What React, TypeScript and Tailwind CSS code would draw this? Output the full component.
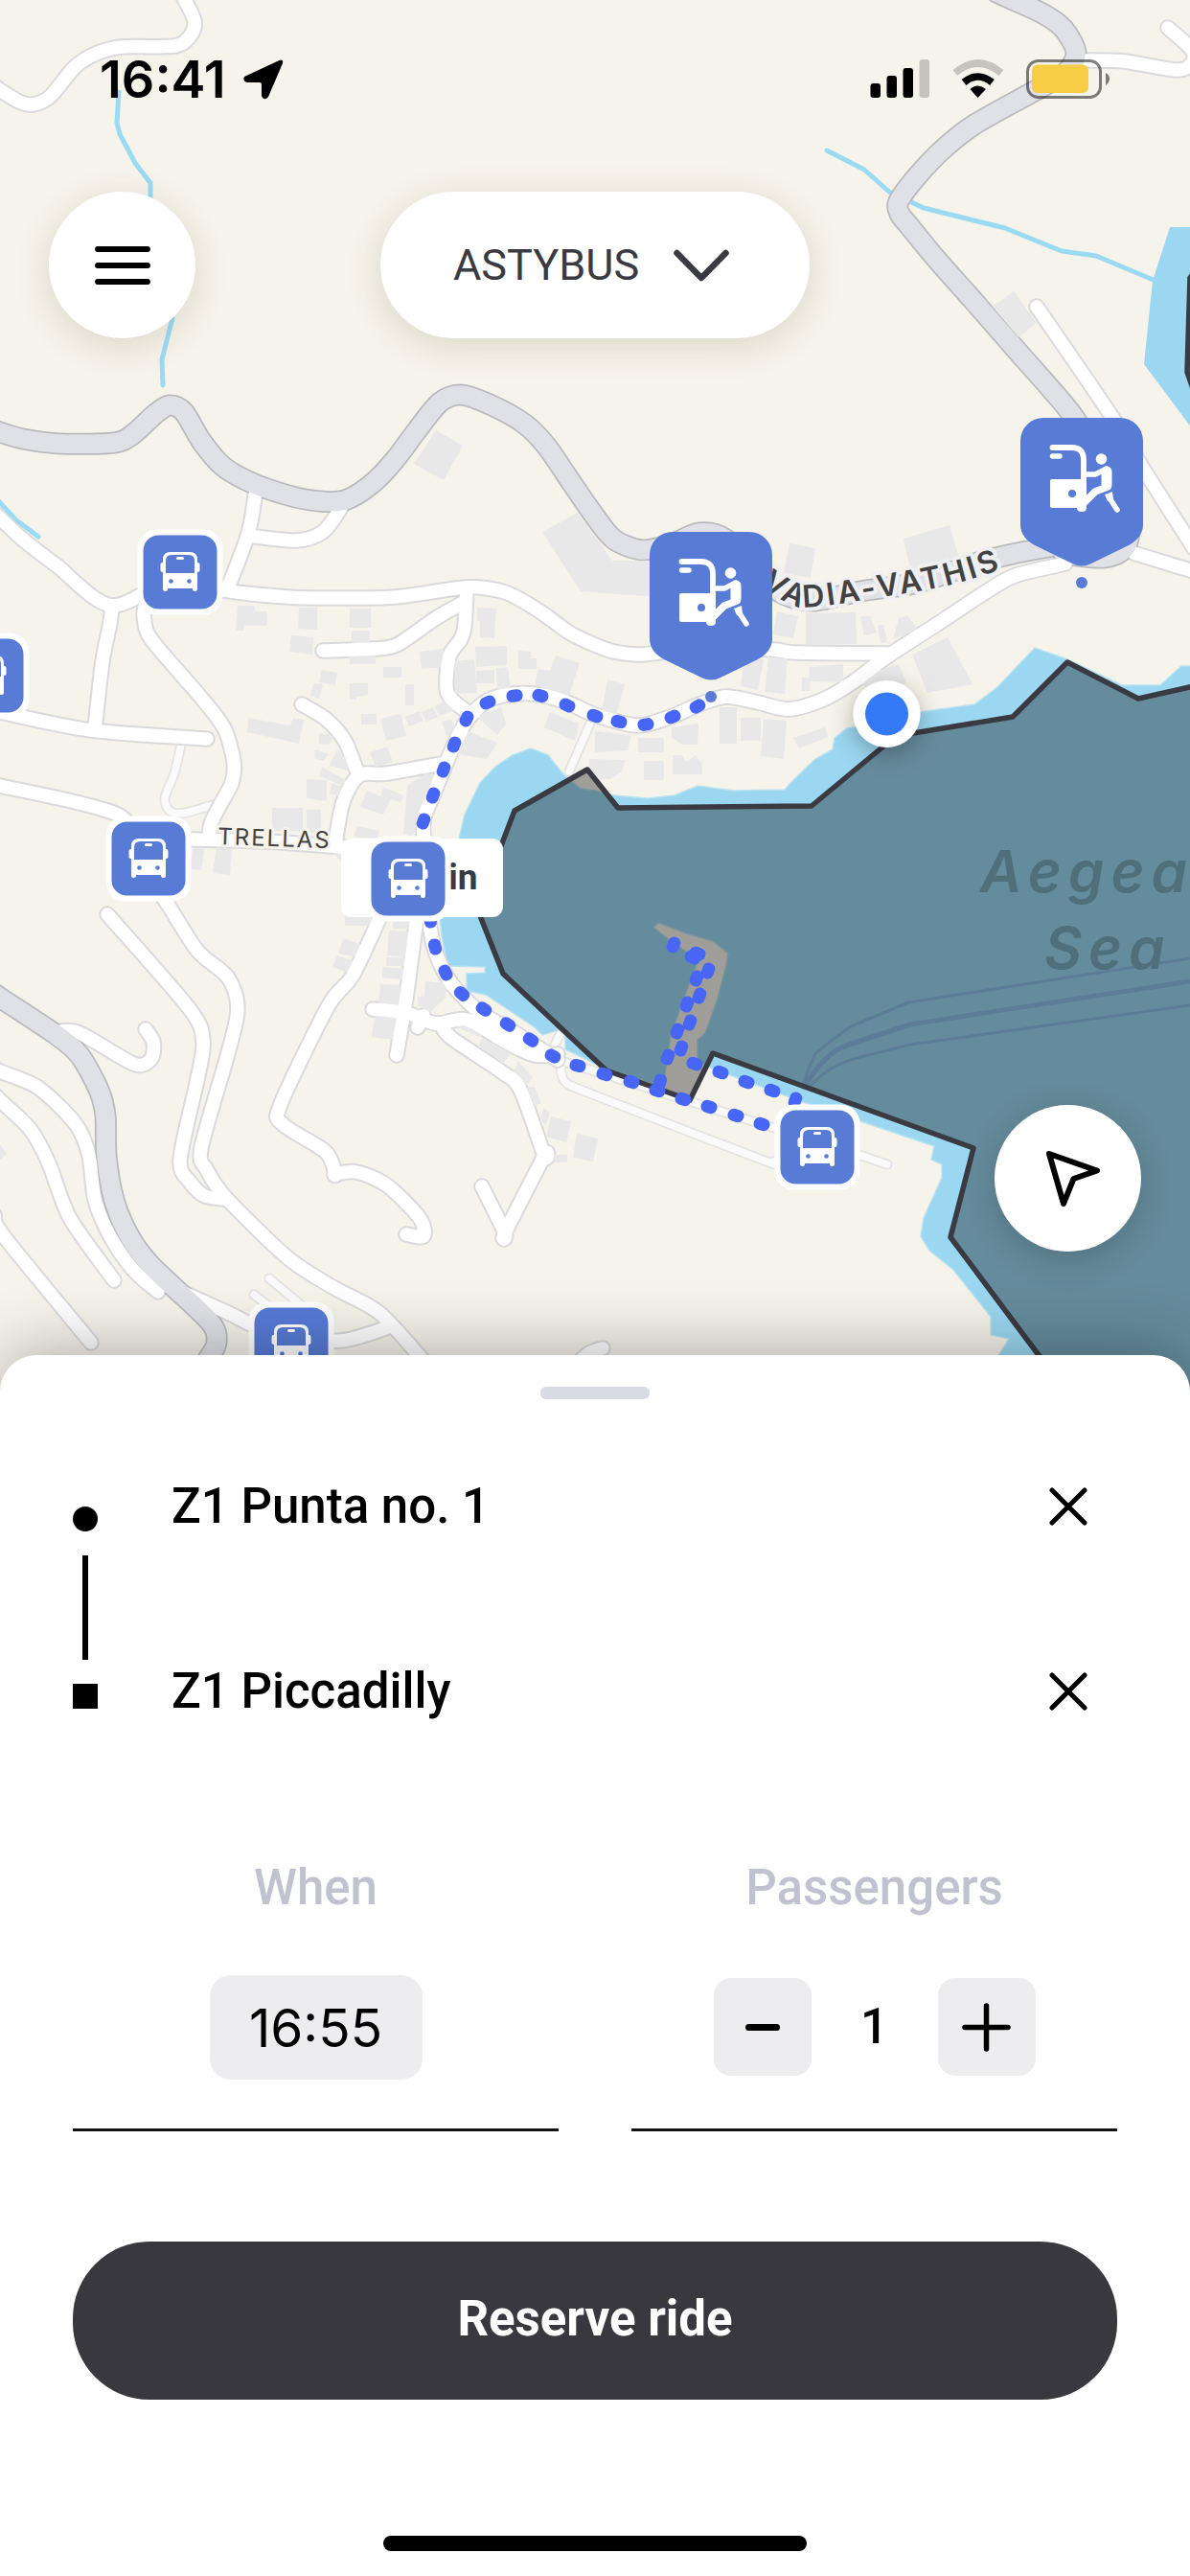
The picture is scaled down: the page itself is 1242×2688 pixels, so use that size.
import { useState } from "react";

type Point = [number, number];

const parse = (s: string): Point[] =>
  s.split(" ").map((p) => p.split(",").map(Number) as Point);

// smooth curve through every point (Catmull-Rom), a doubled point gives a sharp corner
const curve = (s: string) => {
  const p = parse(s);
  let d = `M${p[0][0]} ${p[0][1]}`;
  for (let i = 0; i < p.length - 1; i++) {
    const a = p[i - 1] ?? p[i];
    const b = p[i];
    const c = p[i + 1];
    const e = p[i + 2] ?? c;
    d += `C${b[0] + (c[0] - a[0]) / 7} ${b[1] + (c[1] - a[1]) / 7} ${c[0] - (e[0] - b[0]) / 7} ${c[1] - (e[1] - b[1]) / 7} ${c[0]} ${c[1]}`;
  }
  return d;
};

const majorRoads = [
  "-10,447 0,451 24,458 63,463 119,462 139,453 162,432 177,423 192,430 210,460 232,486 261,503 301,517 333,523 360,522 388,505 412,480 436,448 459,420 481,412 511,422 547,442 570,465 594,500 621,539 641,563 670,574 700,568 730,556 758,563 790,600 820,621 851,627 898,617 958,608 1017,588 1057,578 1110,568",
  "1040,-8 1053,-2 1088,14 1110,30 1123,55 1112,76 1076,97 1017,130 985,155 958,183 938,210 939,223 950,237 977,270 1017,315 1065,370 1096,405 1122,437 1160,500 1178,545 1174,572 1152,582 1110,578",
  "-10,1034 0,1041 59,1080 83,1101 103,1137 110,1164 111,1206 119,1252 135,1290 158,1321 218,1378 226,1401 216,1420",
].map(curve);

const minorRoads = [
  "-6,89 0,94 20,106 34,109 52,101 78,70 100,56 127,49 182,48 198,38 203,22 191,-4",
  "1133,63 1173,64 1228,73 1244,66 1244,52 1219,29",
  "1082,320 1162,437 1195,492 1246,572",
  "1183,577 1242,595 1250,597",
  "1112,588 1061,600 1033,615 977,652 926,685 890,712 859,730 823,740 791,733 758,727 730,735 700,748 665,757 621,746 592,733 564,725 537,724 509,731 488,751 474,777 463,803 452,830 442,857 444,900 448,961 455,995 471,1026 499,1055 531,1074 582,1106",
  "926,682 831,681 807,678 740,676 680,682 665,683 641,680 621,673 594,660 562,637 527,618 487,613 412,623 341,624 301,623 234,616 188,600 117,632 59,590 24,563 -6,535",
  "117,632 115,650 107,690 99,760",
  "-6,742 0,743 95,762 216,771",
  "165,610 152,630 151,650 160,670 210,728 234,760 244,795 242,817 228,843 220,860 218,875",
  "-6,819 0,820 79,837 123,850 140,866",
  "160,875 277,878 370,885",
  "267,512 259,557 238,613",
  "259,559 309,564 337,555 356,530",
  "487,613 485,653 481,667 469,685 467,723 489,744",
  "485,628 455,645 414,673 388,677 337,679",
  "315,735 341,751 360,773 372,803 375,809",
  "466,796 404,807 375,809 358,837 350,880",
  "155,915 174,942 206,992 238,1020 248,1053 238,1099 210,1198 216,1221 236,1250 301,1313 349,1344 396,1370 444,1422",
  "112,954 198,1053 212,1087 206,1126 188,1210 198,1233 214,1248 236,1251",
  "400,950 368,1018 343,1049 293,1152 295,1173 340,1202 350,1225 350,1225 372,1223 404,1237 438,1271 442,1290 424,1288",
  "436,950 424,1041 414,1101",
  "389,1053 424,1057 455,1068 487,1064 527,1087 558,1101 582,1100",
  "442,1060 436,1072",
  "461,1070 471,1083 523,1118 543,1137 568,1206 568,1206 527,1286 527,1286 503,1238",
  "63,1076 83,1078 135,1108 149,1111 159,1103 160,1087 152,1074",
  "-6,1114 0,1118 40,1135 79,1173 93,1206 99,1252 115,1290 139,1325 165,1348",
  "-6,1142 0,1148 32,1179 51,1214 73,1271 119,1336",
  "-6,1268 4,1290 95,1401",
  "185,1346 238,1370 290,1394 356,1399 408,1384",
  "600,1425 615,1412 629,1407",
].map(curve);

const alleys = [
  "189,777 182,807 172,833 178,847 194,848 222,840",
  "616,755 594,805",
  "582,1106 631,1121 713,1147 795,1173 852,1190 926,1215",
  "585,1112 590,1129 621,1143 795,1210 807,1212 830,1200",
  "584,1080 574,1102",
  "281,1334 330,1375",
  "265,1351 290,1370",
].map(curve);

const streams = [
  "124,96 122,128 125,140 141,170 157,191 157,240 180,332 169,375 170,402",
  "863,157 902,177 928,200 964,217 1049,238 1108,262 1144,267 1206,293",
  "-4,520 16,542 40,560",
];

const buildings = [
  "455,449 483,465 463,501 432,484",
  "566,555 603,535 639,585 700,585 700,624 606,617",
  "248,632 265,632 266,638 279,638 278,653 255,653 255,658 246,658",
  "312,634 331,634 331,657 311,656",
  "365,635 387,635 387,655 365,655",
  "304,663 327,665 326,683 302,680",
  "367,658 386,658 386,671 367,671",
  "365,682 392,682 392,693 365,693",
  "335,699 352,702 350,715 333,712",
  "327,713 337,714 333,729 324,726",
  "365,713 384,713 384,725 372,727 372,730 365,730",
  "400,696 419,696 419,707 400,707",
  "423,714 432,714 432,736 423,736",
  "438,680 463,677 465,696 440,698",
  "474,690 495,688 498,723 475,724",
  "496,675 529,674 529,694 497,696",
  "498,634 518,635 516,666 501,665 501,648 498,648",
  "541,679 554,680 554,687 560,687 560,698 541,698",
  "497,700 516,699 516,713 497,713",
  "518,697 530,696 533,720 519,722",
  "562,698 574,700 580,684 605,692 593,728 558,715",
  "259,749 303,757 306,749 317,751 312,776 258,764",
  "377,745 393,745 393,756 377,756",
  "397,750 418,745 424,768 403,773",
  "423,748 438,742 442,752 427,758",
  "440,743 452,738 457,748 445,753",
  "453,737 467,731 474,741 459,747",
  "461,753 471,751 481,767 467,770",
  "497,747 523,738 528,755 519,767",
  "485,762 519,775 508,792 477,787",
  "574,743 604,755 600,773 568,759",
  "333,765 349,768 343,777 333,776",
  "329,782 343,787 337,794 328,791",
  "352,782 368,797 366,805 344,799",
  "336,800 362,815 358,820 333,810",
  "386,785 404,779 410,795 392,800",
  "320,813 341,814 341,836 320,833",
  "347,817 360,823 354,831 344,828",
  "383,825 407,835 400,850 376,842",
  "400,821 421,830 418,837 397,832",
  "444,807 459,809 430,873 421,870 425,820",
  "284,843 316,843 316,867 284,867",
  "320,845 335,845 335,869 320,869",
  "373,862 396,867 394,875 369,873",
  "201,884 213,886 210,908 199,907",
  "226,884 242,886 240,913 222,911",
  "347,890 358,882 358,900",
  "358,979 378,986 374,999 353,995",
  "352,997 371,1004 366,1016 347,1009",
  "406,971 428,972 425,999 404,997",
  "360,955 392,955 392,966 360,966",
  "410,961 430,961 430,969 410,969",
  "403,999 423,999 423,1008 403,1008",
  "399,1009 421,1011 421,1022 399,1020",
  "397,1027 420,1028 417,1052 395,1050",
  "391,1060 414,1062 411,1085 388,1082",
  "444,1024 467,1026 465,1041 448,1057 436,1049 436,1041 443,1039",
  "469,1068 485,1069 504,1080 499,1082",
  "503,1083 533,1099 525,1110 500,1091",
  "541,1108 556,1124 549,1133 535,1118",
  "550,1135 558,1134 565,1151 558,1154",
  "567,1156 574,1161 570,1173 564,1171",
  "575,1165 596,1170 591,1192 570,1186",
  "602,1183 624,1188 619,1212 598,1208",
  "578,1205 592,1205 592,1213 578,1213",
  "0,1194 7,1204 0,1210",
  "824,567 851,572 846,603 818,598",
  "943,562 991,548 1001,583 950,595",
  "811,638 833,643 828,666 807,662",
  "841,640 893,639 894,672 841,673",
  "898,643 908,643 915,660 902,663",
  "916,653 922,652 926,670 919,671",
  "938,645 947,642 958,657 932,667",
  "952,683 989,665 1015,714 968,723",
  "894,707 938,693 946,713 906,720",
  "777,687 797,688 791,720 773,716",
  "802,686 822,687 819,724 798,722",
  "845,696 880,693 880,712 846,711 845,721 837,721 837,707 844,707",
  "634,709 652,714 643,747 628,743",
  "751,738 769,738 769,776 751,776",
  "773,749 794,749 794,773 773,773",
  "797,750 821,752 818,792 794,789",
  "828,770 861,759 864,769 834,781",
  "701,759 729,755 728,777 712,777 701,770",
  "666,770 693,770 693,785 666,785",
  "621,763 659,767 655,783 621,785",
  "672,794 693,794 693,814 672,814",
  "702,788 712,788 716,795 726,788 733,797 733,808 702,808",
  "615,792 652,793 649,805 637,813 615,813",
  "1036,320 1058,304 1082,337 1063,352",
];

const SEA =
  "479,875 485,850 501,817 517,800 535,788 554,781 572,788 588,808 606,823 621,825 641,830 676,833 704,830 728,820 766,825 819,824 829,813 851,792 869,782 871,770 884,760 960,743 1017,735 1041,717 1080,676 1114,688 1171,715 1211,715 1233,695 1250,695 1250,1500 1041,1500 1041,1416 1053,1397 1034,1393 1034,1374 995,1325 970,1305 961,1290 964,1271 983,1229 983,1215 972,1210 975,1196 898,1170 835,1149 738,1113 728,1105 728,1085 736,1078 748,1045 758,1007 760,995 744,982 716,974 688,963 682,967 692,976 716,993 728,1003 700,1080 692,1135 621,1110 590,1095 590,1083 586,1074 566,1080 558,1072 507,1038 487,1034 487,1016 506,1015 506,1009 467,1008 461,976 459,957";

const ZONE =
  "1250,715 1188,729 1114,691 1057,748 935,768 847,841 645,843 613,803 537,846 498,948 525,1016 621,1106 633,1117 720,1148 744,1099 1016,1198 992,1291 1084,1414 1150,1500 1250,1500";

// x, y, heading
const routeDots = [
  [728, 737, -32], [702, 748, -22], [674, 756, -10], [646, 753, 14], [621, 747, 20],
  [592, 736, 25], [564, 726, 15], [537, 726, -8], [509, 733, -22], [487, 750, -65],
  [474, 777, -68], [463, 803, -70], [452, 830, -70], [442, 857, -70], [449, 960, 80],
  [454, 988, 76], [465, 1015, 64], [482, 1037, 42], [505, 1053, 34], [530, 1069, 34],
  [554, 1085, 34], [577, 1102, 28], [603, 1112, 14], [631, 1121, 16], [659, 1129, 18],
  [686, 1138, 18], [713, 1147, 18], [740, 1155, 18], [768, 1164, 18], [795, 1173, 18],
  [703, 986, -68], [723, 999, 25], [728, 995, 20], [727, 1021, -70], [739, 1013, -70],
  [717, 1048, -70], [730, 1039, -70], [707, 1076, -70], [720, 1067, -70], [697, 1103, -70],
  [711, 1094, -70], [689, 1129, -75], [725, 1110, 20], [752, 1119, 20], [779, 1129, 20],
  [806, 1138, 20], [830, 1148, -70],
];

const busStops: Point[] = [
  [188, 597],
  [-14, 705],
  [155, 896],
  [426, 917],
  [853, 1197],
  [304, 1403],
];

const BusStop = ({ x, y }: { x: number; y: number }) => (
  <g transform={`translate(${x} ${y})`}>
    <rect x="-44.5" y="-44.5" width="89" height="89" rx="20" fill="#fff" />
    <rect x="-38.5" y="-38.5" width="77" height="77" rx="16" fill="#587bd6" />
    <path
      d="M-10-21H10Q18-21 18-13V16V18Q18 20 15.500 20T13 18V17H-13V18Q-13 20-15.500 20T-18 18V-13Q-18-21-10-21Z"
      fill="#fff"
    />
    <path d="M-9-18H9Q15-18 15-12V1H-15V-12Q-15-18-9-18Z" fill="#587bd6" />
    <rect x="-20.500" y="-10" width="4" height="10" rx="2" fill="#fff" />
    <rect x="16.500" y="-10" width="4" height="10" rx="2" fill="#fff" />
    <rect x="-4" y="-16" width="8" height="3" rx="1.500" fill="#fff" />
    <circle cx="-9.500" cy="9.500" r="2.300" fill="#587bd6" />
    <circle cx="9.500" cy="9.500" r="2.300" fill="#587bd6" />
  </g>
);

const BoardingPin = ({ x, y }: { x: number; y: number }) => (
  <g transform={`translate(${x} ${y})`}>
    <path
      d="M-40 0H40A24 24 0 0 1 64 24V112C64 121 57 129 49 133L10 152Q0 157-10 152L-49 133C-57 129-64 121-64 112V24A24 24 0 0 1-40 0Z"
      fill="#587bd6"
    />
    <g fill="none" stroke="#fff" strokeLinecap="round" strokeLinejoin="round">
      <path d="M-30.500 31H-11Q2 31 2 44V68" strokeWidth="5.800" />
      <path d="M-30.500 40H-23" strokeWidth="5.500" />
      <path d="M3 59H14L26 53" strokeWidth="5.500" />
      <path d="M26 56V70" strokeWidth="11" />
      <path d="M27 72L14 77L3 88" strokeWidth="7.500" />
      <path d="M37 96L28.500 83" strokeWidth="5.500" />
    </g>
    <path d="M24 80L32 77L33 85L27 87Z" fill="#fff" />
    <path
      d="M-31 64H5V94Q5 98 0 98T-5 94H-31Q-33 94-33 92V66Q-33 64-31 64Z"
      fill="#fff"
    />
    <circle cx="20.500" cy="43" r="5.800" fill="#fff" />
    <circle cx="-10" cy="79" r="4" fill="#587bd6" />
    <circle cx="0" cy="172" r="6" fill="#587bd6" />
  </g>
);

const CityMap = () => (
  <svg
    className="absolute inset-x-0 top-0 h-[1500px] w-full bg-[#f6f3ea]"
    viewBox="0 0 1242 1500"
    preserveAspectRatio="xMidYMin slice"
    role="img"
    aria-label="Map of Livadia"
  >
    <defs>
      <path id="vathis" d="M730 560C765 575 780 605 808 621S835 634 852 633S900 626 932 621S996 612 1047 593" />
      <filter id="dotShadow" x="-50%" y="-50%" width="200%" height="200%">
        <feDropShadow dx="0" dy="6" stdDeviation="12" floodOpacity="0.3" />
      </filter>
    </defs>

    <polygon points={SEA} fill="#9bd7f0" stroke="#b9e2f1" strokeWidth="1.500" />
    <polygon points="1221,237 1250,237 1250,455 1194,380 1203,293" fill="#9bd7f0" />
    <g fill="none" stroke="#9bdaf3" strokeWidth="5" strokeLinecap="round" strokeLinejoin="round">
      {streams.map((s) => (
        <polyline key={s} points={s} />
      ))}
    </g>

    <g fill="none" strokeLinecap="round" strokeLinejoin="round">
      <g stroke="#e3e3e2" strokeWidth="11">
        {alleys.map((d) => <path key={d} d={d} />)}
      </g>
      <g stroke="#fafafa" strokeWidth="7.500">
        {alleys.map((d) => <path key={d} d={d} />)}
      </g>
      <g stroke="#dadadc" strokeWidth="17.500">
        {minorRoads.map((d) => <path key={d} d={d} />)}
      </g>
      <g stroke="#b9babd" strokeWidth="23">
        {majorRoads.map((d) => <path key={d} d={d} />)}
      </g>
    </g>
    <g fill="#e8e8e8">
      {buildings.map((b) => (
        <polygon key={b} points={b} />
      ))}
    </g>
    <g fill="none" strokeLinecap="round" strokeLinejoin="round">
      <g stroke="#ffffff" strokeWidth="13.500">
        {minorRoads.map((d) => <path key={d} d={d} />)}
      </g>
      <g stroke="#e0e1e6" strokeWidth="19.500">
        {majorRoads.map((d) => <path key={d} d={d} />)}
      </g>
      <path d={minorRoads[4]} stroke="#fff" strokeWidth="13.500" />
    </g>

    <g fill="none" stroke="#8fbfe9" strokeLinejoin="round">
      <path d="M837 1133L851 1099L886 1072L948 1046L1242 1000" strokeWidth="3" />
      <path d="M838 1137Q860 1098 886 1090L950 1069L1242 1024" strokeWidth="5" />
      <path d="M843 1137Q862 1112 898 1103L950 1090L1242 1049" strokeWidth="3" />
    </g>

    <g className="font-[Inter,sans-serif] font-semibold italic" fontSize="60" fill="#7aabbc" letterSpacing="7">
      <text x="1023" y="931">Aegea</text>
      <text x="1090" y="1011">Sea</text>
    </g>

    <polygon points={ZONE} fill="#000" fillOpacity="0.350" stroke="#3a3a42" strokeWidth="5.500" strokeLinejoin="round" />
    <polygon points="1250,280 1242,290 1239,388 1250,420" fill="#000" fillOpacity="0.350" stroke="#3a3a42" strokeWidth="5.500" />

    <g className="font-[Inter,sans-serif]" fill="#424242" stroke="#f6f3ea" strokeLinejoin="round" paintOrder="stroke">
      <text fontSize="32" fontWeight="600" letterSpacing="3" textAnchor="end" strokeWidth="8" stroke="#f0f0f2">
        <textPath href="#vathis" startOffset="100%">LIVADIA-VATHIS</textPath>
      </text>
      <text x="227" y="881" fontSize="24" letterSpacing="2" strokeWidth="6" transform="rotate(2 227 881)">
        TRELLAS
      </text>
    </g>

    <g fill="#4766f5">
      {routeDots.map(([x, y, a]) => (
        <rect key={`${x}-${y}`} x="-8.500" y="-6.500" width="17" height="13" rx="6" transform={`translate(${x} ${y}) rotate(${a})`} />
      ))}
    </g>

    <rect x="356" y="875" width="169" height="82" rx="11" fill="#fff" />
    <text x="468" y="928" className="font-[Roboto,sans-serif] font-bold" fontSize="37" fill="#3a3a42">
      in
    </text>
    {busStops.map(([x, y]) => (
      <BusStop key={`${x}-${y}`} x={x} y={y} />
    ))}
    <BoardingPin x={742} y={555} />
    <BoardingPin x={1129} y={436} />

    <circle cx="925.500" cy="745" r="35" fill="#fff" filter="url(#dotShadow)" />
    <circle cx="925.500" cy="745" r="22.500" fill="#347af6" />
  </svg>
);

const StatusBar = () => (
  <div className="flex h-[200px] items-start justify-between pt-[51px] pr-[84px] pl-[104px]">
    <div className="flex items-center gap-[18px]">
      <span className="font-[Inter,sans-serif] text-[54px] leading-[64px] font-semibold">16:41</span>
      <svg className="h-[42px] w-[42px]" viewBox="0 0 42 42" aria-hidden="true">
        <path
          d="M37.500 1Q42-1 41 4L26 39Q23 43 20 40L19 38V26Q19 24 17 24H4Q-1 23 1 18Z"
          fill="#000"
        />
      </svg>
    </div>
    <svg className="mt-[11px] h-[42px] w-[250px]" viewBox="908 62 250 42" aria-hidden="true">
      <rect x="908.500" y="87" width="10.500" height="15" rx="3" />
      <rect x="925.500" y="79" width="10.500" height="23" rx="3" />
      <rect x="942.500" y="71" width="10.500" height="31" rx="3" />
      <rect x="959.500" y="62" width="10.500" height="40" rx="3" fill="#c6c3bc" />
      <g fill="none" strokeWidth="7.500">
        <path d="M997 76Q1020.500 56 1045 76" stroke="#c6c3bc" />
        <path d="M1006 86Q1020.500 74 1035.500 86" stroke="#000" />
      </g>
      <path d="M1012.500 93Q1020.500 86 1029 93L1020.500 102Z" />
      <rect x="1072.500" y="63.500" width="76" height="38" rx="11" fill="none" stroke="#000" strokeOpacity="0.500" strokeWidth="3" />
      <rect x="1077" y="67.500" width="59" height="29.500" rx="6" fill="#f6cd45" />
      <path d="M1154 76Q1158 78 1158 82T1154 89Z" fillOpacity="0.500" />
    </svg>
  </div>
);

const RemoveButton = ({ label, onClick }: { label: string; onClick?: () => void }) => (
  <button type="button" aria-label={label} onClick={onClick} className="mr-[31px] shrink-0">
    <svg className="size-10" viewBox="0 0 40 40" fill="none" stroke="#000" strokeWidth="5" strokeLinecap="round">
      <path d="M3 3L37 37M37 3L3 37" />
    </svg>
  </button>
);

const RideSheet = () => {
  const [time, setTime] = useState("16:55");
  const [passengers, setPassengers] = useState(1);

  return (
    <section className="relative flex flex-col rounded-t-[38px] bg-white px-[76px] pt-[33px] pb-[26px] shadow-[0_-4px_70px_rgba(0,0,0,0.3)]">
      <div className="h-[13px] w-[114px] self-center rounded-md bg-[#d8dbe3]" />

      <div className="mt-20 flex gap-[77px]">
        <div className="flex w-[26px] flex-col items-center gap-[25px] pt-8" aria-hidden="true">
          <span className="size-[26px] rounded-full bg-black" />
          <span className="h-[109px] w-[6px] bg-black" />
          <span className="size-[26px] bg-black" />
        </div>
        <ul className="flex flex-1 flex-col gap-[129px]">
          {["Z1 Punta no. 1", "Z1 Piccadilly"].map((stop) => (
            <li key={stop} className="flex h-16 items-center justify-between">
              <span className="text-[51px] leading-[64px] font-medium">{stop}</span>
              <RemoveButton label={`Remove ${stop}`} />
            </li>
          ))}
        </ul>
      </div>

      <div className="mt-[141px] grid grid-cols-2 gap-[76px]">
        <div className="flex flex-col items-center border-b-[3px] border-[#111111]">
          <label htmlFor="when" className="text-[51px] leading-[64px] font-medium text-[#c0c3cf]">
            When
          </label>
          <input
            id="when"
            type="text"
            inputMode="numeric"
            value={time}
            onChange={(e) => setTime(e.target.value)}
            className="mt-[59px] mb-[51px] h-[109px] w-[222px] rounded-[22px] bg-[#ededef] text-center font-[Inter,sans-serif] text-[55px]"
          />
        </div>
        <div className="flex flex-col items-center border-b-[3px] border-[#111111]">
          <span id="passengers" className="text-[51px] leading-[64px] font-medium text-[#c0c3cf]">
            Passengers
          </span>
          <div role="group" aria-labelledby="passengers" className="mt-[62px] flex items-center">
            <button
              type="button"
              aria-label="Fewer passengers"
              onClick={() => setPassengers(Math.max(1, passengers - 1))}
              className="flex size-[102px] items-center justify-center rounded-[18px] bg-[#ededef]"
            >
              <span className="h-[7px] w-9 rounded-full bg-black" />
            </button>
            <output className="w-[132px] text-center text-[51px] leading-[64px] font-medium">{passengers}</output>
            <button
              type="button"
              aria-label="More passengers"
              onClick={() => setPassengers(passengers + 1)}
              className="flex size-[102px] items-center justify-center rounded-[18px] bg-[#ededef]"
            >
              <svg className="size-[51px]" viewBox="0 0 51 51" stroke="#000" strokeWidth="5.500" strokeLinecap="round">
                <path d="M25.500 3V48M3 25.500H48" />
              </svg>
            </button>
          </div>
        </div>
      </div>

      <button
        type="button"
        className="mt-[115px] h-[165px] rounded-[80px] bg-[#3a383f] pb-1 text-[51px] leading-[64px] font-bold text-white"
      >
        Reserve ride
      </button>

      <div className="mt-[142px] h-4 w-[442px] self-center rounded-full bg-black" />
    </section>
  );
};

export default function App() {
  return (
    <main className="relative flex min-h-screen flex-col overflow-hidden bg-[#f6f3ea] font-[Roboto,sans-serif] text-black">
      <CityMap />

      <div className="relative flex flex-1 flex-col">
        <StatusBar />

        <div className="grid grid-cols-[1fr_auto_1fr] items-center px-[51px]">
          <button
            type="button"
            aria-label="Menu"
            className="flex size-[153px] items-center justify-center rounded-full bg-white shadow-[0_8px_36px_rgba(90,70,30,0.16)]"
          >
            <svg className="h-[42px] w-[58px]" viewBox="0 0 58 42" stroke="#000" strokeWidth="5.800" strokeLinecap="round">
              <path d="M3 4H55M3 21H55M3 38H55" />
            </svg>
          </button>

          <div className="relative h-[153px] w-[448px] rounded-full bg-white shadow-[0_8px_36px_rgba(90,70,30,0.16)]">
            <select
              aria-label="Service"
              className="size-full appearance-none rounded-full bg-transparent pr-[140px] pl-[76px] text-[45px] text-[#3a3a42]"
            >
              <option>ASTYBUS</option>
            </select>
            <svg
              className="pointer-events-none absolute top-[60px] right-[84px] h-[35px] w-[58px]"
              viewBox="0 0 58 35"
              fill="none"
              stroke="#3a3a42"
              strokeWidth="6.500"
              strokeLinecap="round"
              strokeLinejoin="round"
            >
              <path d="M3.500 4L29 30L54.500 4" />
            </svg>
          </div>
        </div>

        <div className="mt-auto mb-[108px] flex justify-end px-[51px]">
          <button
            type="button"
            aria-label="Centre on my location"
            className="flex size-[153px] items-center justify-center rounded-full bg-white shadow-[0_8px_36px_rgba(0,0,0,0.2)]"
          >
            <svg
              className="size-[76px]"
              viewBox="-38 -38 76 76"
              fill="none"
              stroke="#000"
              strokeWidth="6"
              strokeLinecap="round"
              strokeLinejoin="round"
            >
              <path d="M-20-26L30-8.500L5.500 0L-5 26Z" />
            </svg>
          </button>
        </div>
      </div>

      <RideSheet />
    </main>
  );
}
